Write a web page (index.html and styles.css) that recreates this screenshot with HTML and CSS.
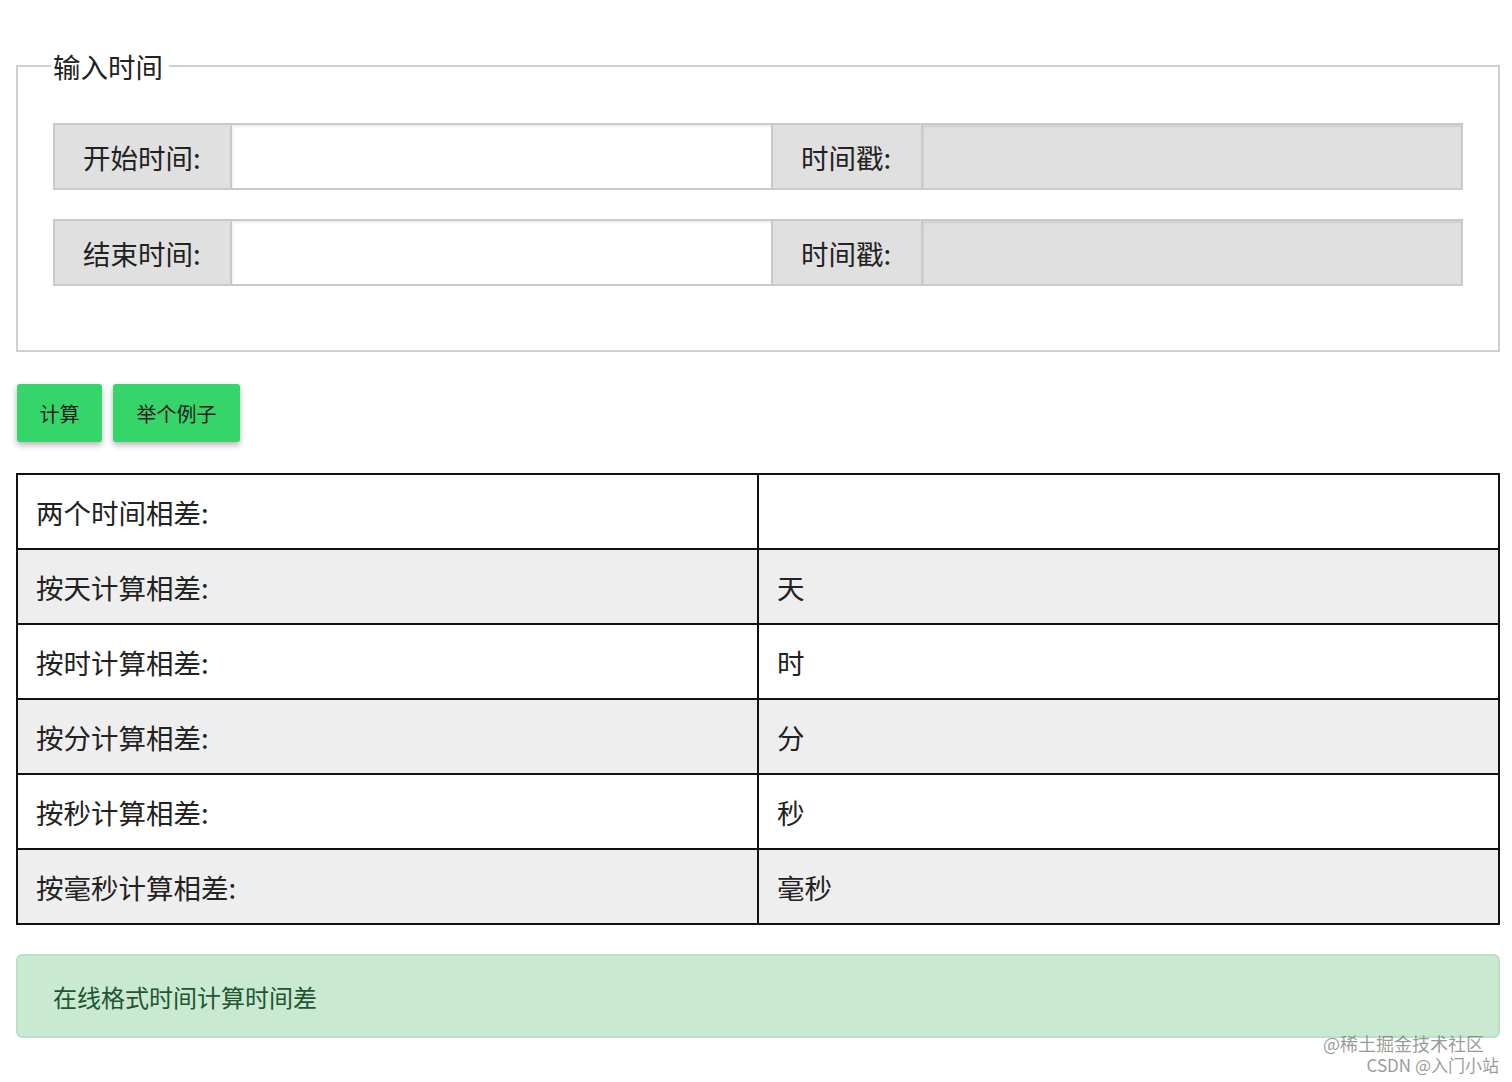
FILE: index.html
```html
<!DOCTYPE html>
<html lang="zh">
<head>
<meta charset="utf-8">
<title>在线格式时间计算时间差</title>
<link rel="stylesheet" href="styles.css">
</head>
<body>
<div class="page">
  <fieldset class="box">
    <legend class="legend">输入时间</legend>
    <div class="group">
      <span class="addon addon-wide">开始时间:</span>
      <input class="field" type="text">
      <span class="addon addon-narrow">时间戳:</span>
      <input class="field field-ro" type="text" readonly>
    </div>
    <div class="group">
      <span class="addon addon-wide">结束时间:</span>
      <input class="field" type="text">
      <span class="addon addon-narrow">时间戳:</span>
      <input class="field field-ro" type="text" readonly>
    </div>
  </fieldset>

  <div class="actions">
    <button class="btn btn-calc">计算</button>
    <button class="btn btn-demo">举个例子</button>
  </div>

  <table class="result">
    <tr><td>两个时间相差:</td><td></td></tr>
    <tr><td>按天计算相差:</td><td>天</td></tr>
    <tr><td>按时计算相差:</td><td>时</td></tr>
    <tr><td>按分计算相差:</td><td>分</td></tr>
    <tr><td>按秒计算相差:</td><td>秒</td></tr>
    <tr><td>按毫秒计算相差:</td><td>毫秒</td></tr>
  </table>

  <div class="alert">在线格式时间计算时间差</div>
</div>
<div class="watermark">
  <div class="wm-1">@稀土掘金技术社区</div>
  <div class="wm-2">CSDN @入门小站</div>
</div>
</body>
</html>
```
FILE: styles.css
```css
html, body {
  margin: 0;
  padding: 0;
  background: #fff;
}
body {
  font-family: "Noto Sans CJK SC", "Noto Sans", sans-serif;
  color: #222;
  position: relative;
  min-height: 1082px;
}
.page {
  padding: 51px 12px 0 16px;
}
.box {
  margin: 0;
  border: 2px solid #cfcfcf;
  padding: 42px 35px 64px 35px;
  min-width: 0;
}
.legend {
  font-size: 27.5px;
  line-height: 30px;
  padding: 0 6px 0 2px;
  margin-left: -2px;
  color: #222;
}
.group {
  display: flex;
  height: 67px;
  box-sizing: border-box;
  border: 2px solid #c9c9c9;
  margin-bottom: 29px;
  width: 1410px;
}
.group:last-child {
  margin-bottom: 0;
}
.addon {
  display: flex;
  align-items: center;
  background: #e0e0e0;
  font-size: 27.5px;
  color: #222;
  box-sizing: border-box;
  border-right: 2px solid #c9c9c9;
}
.addon-wide {
  width: 177px;
  padding-left: 28px;
}
.addon-narrow {
  width: 150px;
  padding-left: 28px;
}
.field {
  flex: none;
  border: 0;
  margin: 0;
  padding: 0;
  height: 100%;
  outline: none;
  background: #fff;
  box-sizing: border-box;
  box-shadow: inset 1px 2px 2px rgba(0,0,0,0.07);
}
.group .field:nth-of-type(1) {
  width: 541px;
  border-right: 2px solid #c9c9c9;
}
.field-ro {
  background: #e0e0e0;
  flex: 1;
}
.actions {
  display: flex;
  gap: 11px;
  margin-top: 32px;
  padding-left: 1px;
}
.btn {
  height: 58px;
  border: 0;
  border-radius: 3px;
  background: #35d56a;
  color: #1d1d1d;
  font-family: "Noto Sans CJK SC", "Noto Sans", sans-serif;
  font-size: 20px;
  box-shadow: 0 3px 6px rgba(0,0,0,0.3);
  padding: 0;
}
.btn-calc { width: 85px; }
.btn-demo { width: 127px; }
.result {
  margin-top: 31px;
  width: 100%;
  border-collapse: collapse;
  border: 2px solid #111;
}
.result td {
  border: 2px solid #111;
  height: 75px;
  padding: 0 0 0 18px;
  font-size: 27.5px;
  color: #222;
  width: 50%;
  box-sizing: border-box;
}
.result tr:nth-child(even) td {
  background: #eeeeee;
}
.alert {
  margin-top: 29px;
  height: 84px;
  box-sizing: border-box;
  background: #c9e9d1;
  border: 2px solid #b9e2c4;
  border-radius: 6px;
  display: flex;
  align-items: center;
  padding-left: 35px;
  font-size: 24px;
  color: #1f5631;
}
.watermark {
  position: absolute;
  right: 13px;
  top: 1033px;
  text-align: right;
  color: rgba(120,120,120,0.75);
}
.wm-1 {
  font-size: 18px;
  line-height: 21px;
  height: 21px;
  margin-right: 15px;
}
.wm-2 {
  font-size: 17px;
  line-height: 21px;
  height: 21px;
}
```
